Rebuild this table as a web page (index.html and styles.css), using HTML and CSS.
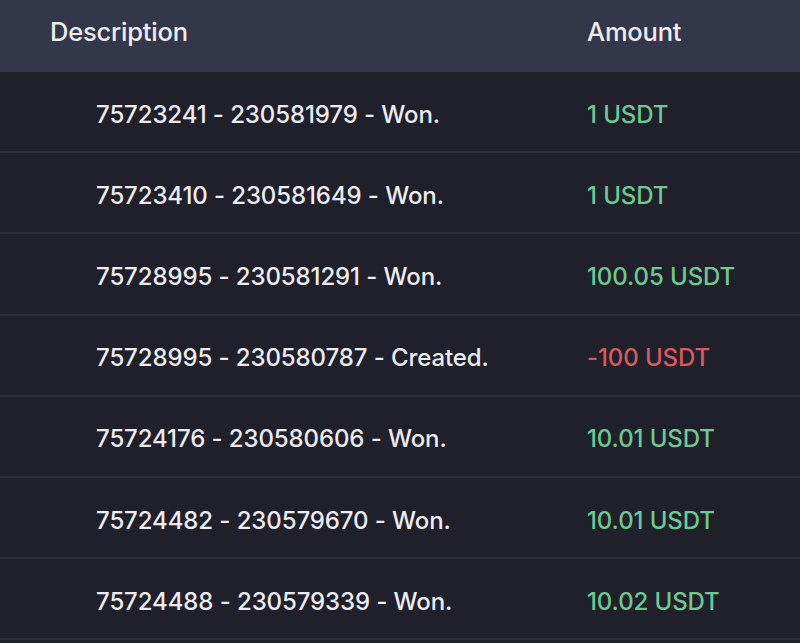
FILE: index.html
```html
<!DOCTYPE html>
<html>
<head>
<meta charset="utf-8">
<link rel="stylesheet" href="styles.css">
</head>
<body>
<div class="table">
  <div class="head">
    <div class="c-desc">Description</div>
    <div class="c-amt">Amount</div>
  </div>
  <div class="row"><div class="d">75723241 - 230581979 - Won.</div><div class="a pos">1 USDT</div></div>
  <div class="row"><div class="d">75723410 - 230581649 - Won.</div><div class="a pos">1 USDT</div></div>
  <div class="row"><div class="d">75728995 - 230581291 - Won.</div><div class="a pos">100.05 USDT</div></div>
  <div class="row"><div class="d">75728995 - 230580787 - Created.</div><div class="a neg">-100 USDT</div></div>
  <div class="row"><div class="d">75724176 - 230580606 - Won.</div><div class="a pos">10.01 USDT</div></div>
  <div class="row"><div class="d">75724482 - 230579670 - Won.</div><div class="a pos">10.01 USDT</div></div>
  <div class="row"><div class="d">75724488 - 230579339 - Won.</div><div class="a pos">10.02 USDT</div></div>
</div>
</body>
</html>
```
FILE: styles.css
```css
html, body {
  margin: 0;
  padding: 0;
  background: #1f2029;
  height: 643px;
  overflow: hidden;
}
.table {
  font-family: Inter, "Noto Sans", sans-serif;
  color: #ececf1;
}
.head {
  height: 72px;
  background: #34364a;
  display: grid;
  grid-template-columns: 537px 1fr;
  align-items: center;
  padding-left: 50px;
  font-size: 25.5px;
  font-weight: 500;
  letter-spacing: -0.2px;
}
.head > div { padding-bottom: 10px; }
.row {
  height: 79.2px;
  border-bottom: 2px solid #2d2f3b;
  display: grid;
  grid-template-columns: 491px 1fr;
  align-items: center;
  padding-left: 96px;
  font-size: 24px;
  font-weight: 500;
  letter-spacing: -0.1px;
}
.row > div { padding-top: 5px; }
.pos { color: #6cc993; }
.neg { color: #d9595e; }
```
